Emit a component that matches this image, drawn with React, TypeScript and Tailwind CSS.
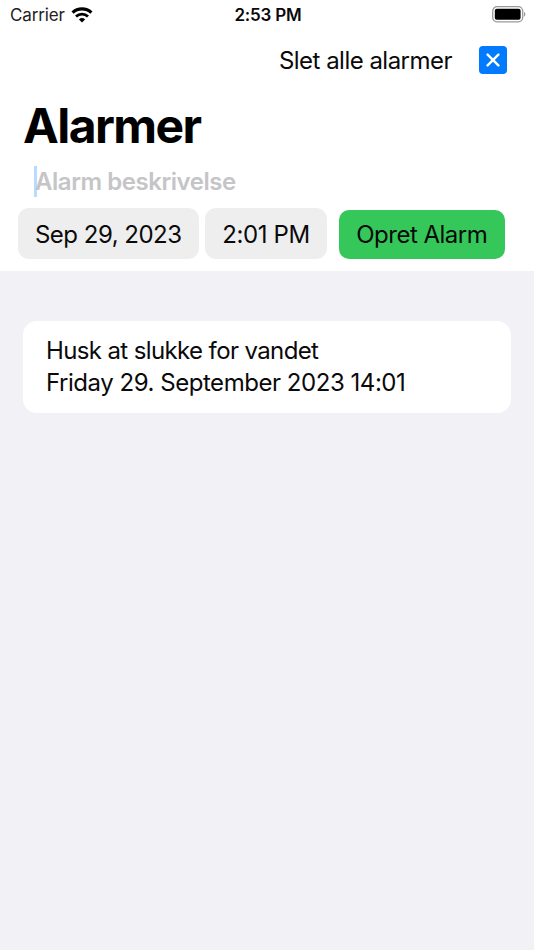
type Alarm = {
  title: string;
  date: string;
};

const alarms: Alarm[] = [
  {
    title: "Husk at slukke for vandet",
    date: "Friday 29. September 2023 14:01",
  },
];

function WifiIcon() {
  return (
    <svg width="22" height="16" viewBox="0 0 22 16" fill="none" aria-hidden="true">
      <path d="M1.6 5.7A13.6 13.6 0 0 1 20.4 5.7" stroke="#000" strokeWidth="3.2" />
      <path d="M5 9.5A8.8 8.8 0 0 1 17 9.5" stroke="#000" strokeWidth="2.9" />
      <path d="M11 15.6L7.9 12.5A4.6 4.6 0 0 1 14.1 12.5Z" fill="#000" />
    </svg>
  );
}

function BatteryIcon() {
  return (
    <svg width="34" height="17" viewBox="0 0 34 17" fill="none" aria-hidden="true">
      <rect x="0.7" y="0.7" width="30" height="15.2" rx="4.4" fill="#fff" stroke="#999" strokeWidth="1.3" />
      <rect x="2.8" y="2.8" width="25.8" height="11" rx="2" fill="#000" />
      <path d="M32 6C33.8 6.6 33.8 10 32 10.6Z" fill="#999" />
    </svg>
  );
}

function StatusBar() {
  return (
    <div className="grid h-[30px] grid-cols-3 items-center pl-[10px] pr-[8px]">
      <div className="flex items-center gap-[6px]">
        <span className="text-[17px] leading-5 tracking-[-0.15px] text-[#222]">Carrier</span>
        <WifiIcon />
      </div>
      <span className="text-center text-[17px] font-semibold leading-5 tracking-[-0.2px]">
        2:53 PM
      </span>
      <div className="flex justify-end pb-[2px]">
        <BatteryIcon />
      </div>
    </div>
  );
}

function AlarmCard({ title, date }: Alarm) {
  return (
    <li className="h-[92px] rounded-[14px] bg-white px-[23px] pt-[14px] text-[24px] leading-8">
      <p className="whitespace-nowrap tracking-[-0.62px]">{title}</p>
      <p className="whitespace-nowrap tracking-[-0.46px]">{date}</p>
    </li>
  );
}

export default function App() {
  return (
    <div className="min-h-screen bg-[#f2f1f6] font-['Inter',sans-serif] text-[#0a0a0a]">
      <header className="h-[270.5px] bg-white">
        <StatusBar />

        <div className="flex h-[60px] items-center justify-end gap-[27px] pr-[27px]">
          <span className="pt-[2px] text-[24px] leading-8 tracking-[-0.52px]">
            Slet alle alarmer
          </span>
          <button
            aria-label="Slet alle"
            className="flex h-7 w-7 items-center justify-center rounded-[4px] bg-[#007aff]"
          >
            <svg width="14" height="14" viewBox="0 0 14 14" aria-hidden="true">
              <path
                d="M1.6 1.6L12.4 12.4M12.4 1.6L1.6 12.4"
                stroke="#fff"
                strokeWidth="2.4"
                strokeLinecap="round"
              />
            </svg>
          </button>
        </div>

        <h1 className="pl-[23px] pt-[6px] text-[48px] font-bold leading-[60px] tracking-[-1.6px] text-black">
          Alarmer
        </h1>

        <div className="mt-[9px] flex h-8 items-center pl-[34px]">
          <span className="h-[31px] w-[3px] bg-[#b9dbff]" />
          <span className="-ml-[2px] pt-px text-[24px] font-semibold leading-8 tracking-[-0.45px] text-[#c5c5c7]">
            Alarm beskrivelse
          </span>
        </div>

        <div className="mt-[11px] flex items-center pl-[18px] text-[24px] leading-8">
          <button className="h-[51px] w-[180.5px] whitespace-nowrap rounded-[11px] bg-[#eeeeef] pt-[2px] tracking-[-0.5px]">
            Sep 29, 2023
          </button>
          <button className="ml-[6.5px] h-[51px] w-[122px] whitespace-nowrap rounded-[11px] bg-[#eeeeef] pt-[2px] tracking-[-0.4px]">
            2:01 PM
          </button>
          <button className="ml-[12px] mt-px h-[49px] w-[165.5px] whitespace-nowrap rounded-[10px] bg-[#35c759] pt-px tracking-[-0.5px]">
            Opret Alarm
          </button>
        </div>
      </header>

      <ul className="px-[23px] pt-[50px]">
        {alarms.map((alarm) => (
          <AlarmCard key={alarm.date} {...alarm} />
        ))}
      </ul>
    </div>
  );
}
